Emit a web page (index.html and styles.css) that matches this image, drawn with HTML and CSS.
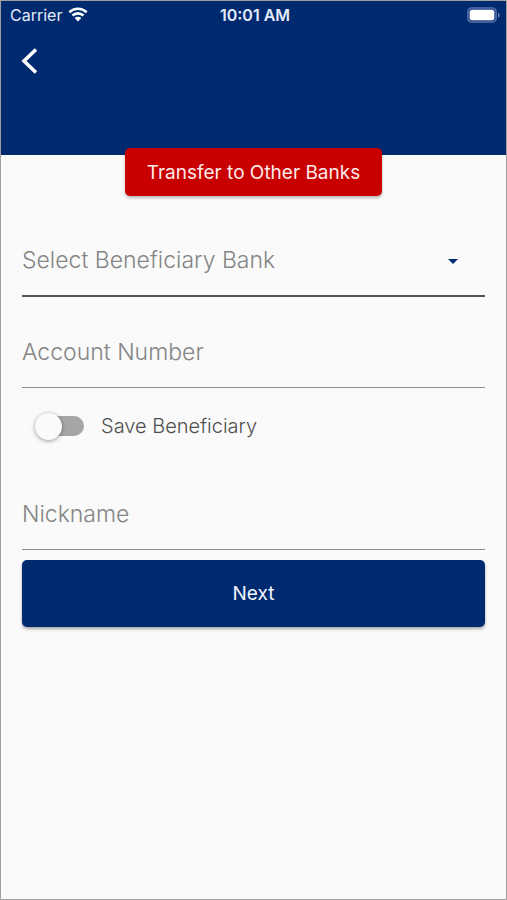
FILE: index.html
```html
<!DOCTYPE html>
<html lang="en">
<head>
<meta charset="utf-8">
<meta name="viewport" content="width=device-width, initial-scale=1">
<title>Transfer to Other Banks</title>
<link rel="stylesheet" href="styles.css">
</head>
<body>
<div class="screen">
  <header class="header">
    <div class="status">
      <div class="carrier">
        <span>Carrier</span>
        <svg class="wifi" viewBox="0 0 20 15" aria-hidden="true">
          <path d="M1.3 5.2C6.2.6 13.8.6 18.7 5.2M4.5 8.5c3.1-2.9 7.9-2.9 11 0" fill="none" stroke="currentColor" stroke-width="2.6"/>
          <path d="M6.7 11.1c1.9-1.7 4.7-1.7 6.6 0L10 14.5z" fill="currentColor"/>
        </svg>
      </div>
      <span class="time">10:01 AM</span>
      <svg class="battery" viewBox="0 0 33 16" aria-hidden="true">
        <rect x=".8" y=".8" width="28.4" height="14.4" rx="4" fill="#28498a" stroke="#5872a8" stroke-width="1.3"/>
        <rect x="2.7" y="2.7" width="24.6" height="10.6" rx="2.5" fill="#fff"/>
        <path d="M31 5.4c2 .8 2 4.4 0 5.2z" fill="#7187b5"/>
      </svg>
    </div>
    <button class="back" type="button" aria-label="Back">
      <svg viewBox="0 0 18 28" aria-hidden="true"><path d="M15 2.5 3 14l12 11.5" fill="none" stroke="currentColor" stroke-width="3.6"/></svg>
    </button>
  </header>
  <main class="content">
    <button class="title" type="button">Transfer to Other Banks</button>
    <form class="form">
      <div class="field bank">
        <select class="control" aria-label="Select Beneficiary Bank">
          <option>Select Beneficiary Bank</option>
        </select>
        <svg class="caret" viewBox="0 0 10 5" aria-hidden="true"><path d="M0 0h10L5 5z" fill="#002a70"/></svg>
      </div>
      <div class="field"><input class="control" type="text" inputmode="numeric" placeholder="Account Number" aria-label="Account Number"></div>
      <label class="save"><input class="switch" type="checkbox" role="switch"><span>Save Beneficiary</span></label>
      <div class="field"><input class="control" type="text" placeholder="Nickname" aria-label="Nickname"></div>
      <button class="next" type="button">Next</button>
    </form>
  </main>
</div>
</body>
</html>
```
FILE: styles.css
```css
* { box-sizing: border-box; }

body {
  margin: 0;
  background: #fafafa;
  color: #4f4f4f;
  font-family: Inter, "Liberation Sans", sans-serif;
}

button, input, select { font: inherit; }

.screen {
  min-height: 100vh;
  border: 1px solid #a0a0a0;
}

.header {
  padding-bottom: 72px;
  background: #002a70;
  color: #fff;
}

.status {
  display: grid;
  grid-template-columns: 1fr auto 1fr;
  align-items: center;
  height: 27px;
  padding: 0 6px 0 9px;
  color: #e3ebfa;
  font-size: 16px;
}

.carrier {
  display: flex;
  align-items: center;
  gap: 6px;
}

.wifi { width: 20px; height: 15px; color: #fff; }

.time { font-weight: 600; }

.battery { width: 33px; height: 16px; justify-self: end; }

.back {
  display: block;
  height: 48px;
  margin: 7px 0 0 8px;
  padding: 4px 12px 0;
  border: 0;
  background: none;
  color: #fff;
}

.back svg { display: block; width: 18px; height: 28px; }

.content { padding: 0 21px; }

.title {
  display: block;
  height: 48px;
  margin: -7px auto 0;
  padding: 0 22px;
  border: 0;
  border-radius: 5px;
  background: #c80000;
  color: #ffeaea;
  font-size: 19px;
  box-shadow: 0 2px 3px #0004;
  position: relative;
}

.form { display: flex; flex-direction: column; }

.field {
  display: flex;
  height: 72px;
  border-bottom: 1px solid #8e8e8e;
}

.bank {
  height: 76px;
  margin: 25px 0 19px;
  border-bottom: 2px solid #565358;
  position: relative;
}

.control {
  flex: 1;
  min-width: 0;
  padding: 0;
  border: 0;
  outline: 0;
  border-radius: 0;
  background: none;
  color: #858585;
  font-size: 23px;
  font-weight: 300;
  appearance: none;
}

.bank .control { padding-top: 4px; }

.control::placeholder { color: #858585; opacity: 1; }

.caret {
  position: absolute;
  top: 38px;
  right: 27px;
  width: 10px;
  height: 5px;
  pointer-events: none;
}

.save {
  display: flex;
  align-items: center;
  gap: 17px;
  height: 76px;
  margin-bottom: 14px;
  padding-left: 21px;
  font-size: 20px;
  font-weight: 300;
}

.switch {
  display: flex;
  align-items: center;
  width: 41px;
  height: 20px;
  margin: 0;
  border-radius: 10px;
  background: #a6a6a6;
  appearance: none;
}

.switch::before {
  content: "";
  width: 27px;
  height: 27px;
  margin-left: -8px;
  flex: none;
  border-radius: 50%;
  background: #fafafa;
  box-shadow: 0 1px 4px #0006;
}

.switch:checked { justify-content: flex-end; background: #6f8dc2; }

.next {
  height: 67px;
  margin-top: 10px;
  border: 0;
  border-radius: 5px;
  background: #002a70;
  color: #f2f6ff;
  font-size: 19px;
  box-shadow: 0 2px 3px #0005;
}
```
